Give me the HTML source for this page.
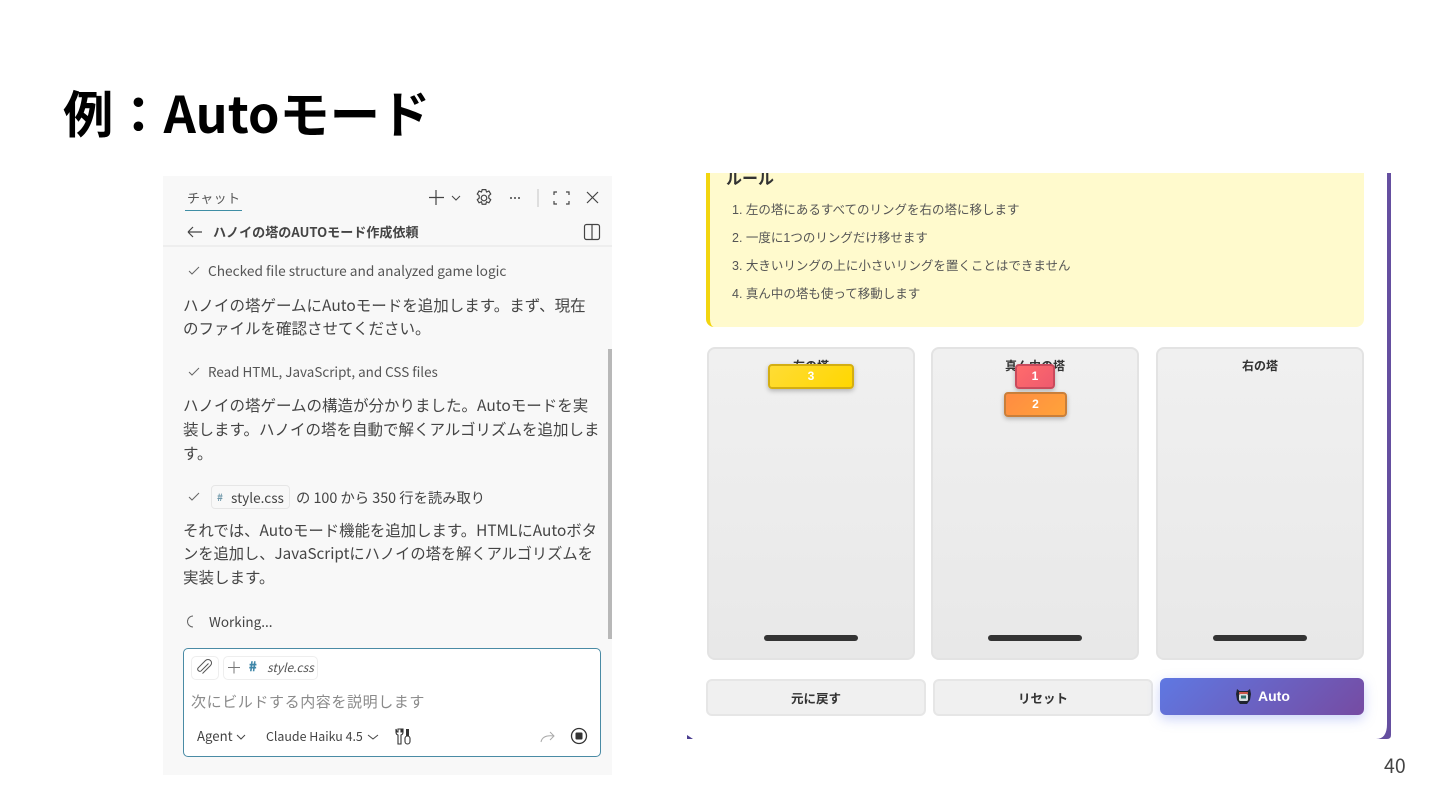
<!DOCTYPE html>
<html lang="ja"><head><meta charset="utf-8"><title>例：Autoモード</title>
<style>
*{box-sizing:border-box}
html,body{margin:0;padding:0;background:#fff}
body{width:1440px;height:810px;position:relative;overflow:hidden;font-family:"Noto Sans CJK JP","Liberation Sans",sans-serif}
.shot{position:absolute;left:0;top:0;width:1440px;height:810px;filter:blur(.3px)}
.a{position:absolute;white-space:nowrap}
.t{position:absolute;white-space:nowrap;line-height:24px;font-size:15.5px;color:#444;left:183px}
.s{position:absolute;white-space:nowrap;line-height:20px;font-size:13.7px;color:#555;left:208px}
.r{position:absolute;white-space:nowrap;line-height:20px;font-size:12.5px;color:#555;left:732px;font-family:"Liberation Sans","Noto Sans CJK JP",sans-serif}
.tower{position:absolute;top:347px;width:208px;height:313px;border:2px solid #e3e3e3;border-radius:8px;background:linear-gradient(#f0f0f0,#e8e8e8)}
.tl{position:absolute;top:357px;width:208px;text-align:center;font-size:12px;font-weight:700;line-height:18px;color:#333;font-family:"Liberation Sans","Noto Sans CJK JP",sans-serif}
.base{position:absolute;top:635px;width:94px;height:6px;border-radius:3px;background:#333}
.disk{position:absolute;height:25px;border-radius:4px;color:#fff;font:700 12px/21px "Liberation Sans",sans-serif;text-align:center;box-shadow:0 2px 5px rgba(0,0,0,.25)}
.btn{position:absolute;top:679px;height:37px;border:2px solid #e6e6e6;border-radius:6px;background:#f0f0f0;color:#333;font:700 12.5px/36px "Liberation Sans","Noto Sans CJK JP",sans-serif;text-align:center}
svg{position:absolute;overflow:visible;fill:none}
</style></head><body>

<div class="a" style="left:63px;top:76px;font-size:50.3px;font-weight:700;line-height:72px;color:#000">例：Autoモード</div>

<div class="shot">
<!-- chat panel -->
<div class="a" style="left:163px;top:176px;width:449px;height:599px;background:#f8f8f8"></div>
<div class="a" style="left:163px;top:245px;width:449px;height:2px;background:#eeeeee"></div>
<div class="a" style="left:608px;top:349px;width:4px;height:290px;background:#b8b8b8"></div>

<div class="a" style="left:187px;top:188px;font-size:13px;line-height:20px;color:#555;letter-spacing:.4px">チャット</div>
<div class="a" style="left:185px;top:210px;width:57px;height:1px;background:#3f8ea5"></div>

<svg style="left:0;top:0" width="1440" height="810" stroke="#444" stroke-width="1.2">
<path d="M436 190V205M429 197.500H444"/>
<path d="M452 196l4 4 4-4" stroke-width="1"/>
<circle cx="484" cy="198" r="2.800"/>
<g transform="translate(484 198) scale(1.2) translate(-484 -198)" stroke-width="1">
<path d="M482.500 191h3l.6 2 2-.8 1.500 2.500-1.600 1.400v2l1.600 1.400-1.500 2.500-2-.8-.6 2h-3l-.6-2-2 .8-1.500-2.500 1.600-1.400v-2l-1.600-1.400 1.500-2.500 2 .8z"/>
</g>
<path d="M538 189V207" stroke="#ccc"/>
<path d="M554 195v-3h3M566 192h3v3M569 201v3h-3M557 204h-3v-3"/>
<path d="M587 192l11 11M598 192l-11 11"/>
<path d="M188 232h14M188 232l5-5M188 232l5 5"/>
<rect x="584.500" y="224.500" width="15" height="15" rx="2"/>
<path d="M592 224.500v15"/>
<path d="M189 271l3 3 7-7M189 372l3 3 7-7M189 497l3 3 7-7" stroke="#666" stroke-width="1"/>
<path d="M193 616a5.500 5.500 0 0 0 0 11" stroke="#666" stroke-width="1"/>
</svg>
<div class="a" style="left:508px;top:197px;width:14px;text-align:center;font-size:0">
<span style="display:inline-block;width:2px;height:2px;background:#444;margin:0 1px;border-radius:50%"></span><span style="display:inline-block;width:2px;height:2px;background:#444;margin:0 1px;border-radius:50%"></span><span style="display:inline-block;width:2px;height:2px;background:#444;margin:0 1px;border-radius:50%"></span>
</div>

<div class="a" style="left:213px;top:222px;font-size:13.07px;font-weight:700;line-height:20px;color:#444">ハノイの塔のAUTOモード作成依頼</div>

<div class="s" style="top:260px">Checked file structure and analyzed game logic</div>
<div class="t" style="top:292.500px">ハノイの塔ゲームにAutoモードを追加します。まず、現在</div>
<div class="t" style="top:316px">のファイルを確認させてください。</div>
<div class="s" style="top:361px;font-size:13.45px">Read HTML, JavaScript, and CSS files</div>
<div class="t" style="top:393px">ハノイの塔ゲームの構造が分かりました。Autoモードを実</div>
<div class="t" style="top:417px">装します。ハノイの塔を自動で解くアルゴリズムを追加しま</div>
<div class="t" style="top:441px">す。</div>

<div class="a" style="left:211px;top:485px;width:79px;height:24px;border:1px solid #e6e6e6;border-radius:4px;background:#f8f8f8"></div>
<div class="a" style="left:217px;top:488px;font-size:10px;line-height:18px;font-weight:700;color:#6d96a8">#</div>
<div class="s" style="left:231px;top:487px;color:#444;font-size:13.6px">style.css</div>
<div class="s" style="left:296px;top:487.500px;color:#444;font-size:14.3px">の 100 から 350 行を読み取り</div>

<div class="t" style="top:518px;font-size:15.4px">それでは、Autoモード機能を追加します。HTMLにAutoボタ</div>
<div class="t" style="top:541px;font-size:15.25px">ンを追加し、JavaScriptにハノイの塔を解くアルゴリズムを</div>
<div class="t" style="top:565px">実装します。</div>
<div class="s" style="left:209px;top:611px;color:#444;font-size:13.5px">Working...</div>

<!-- input -->
<div class="a" style="left:183px;top:648px;width:418px;height:109px;background:#fff;border:1px solid #4a8ba5;border-radius:5px"></div>
<div class="a" style="left:191px;top:656px;width:28px;height:24px;border:1px solid #eee;border-radius:5px"></div>
<div class="a" style="left:223px;top:656px;width:95px;height:24px;border:1px solid #eee;border-radius:5px"></div>
<div class="a" style="left:249px;top:657px;font-size:13px;font-weight:700;line-height:18px;color:#3f86a8;-webkit-text-stroke:.4px #3f86a8">#</div>
<div class="a" style="left:267px;top:658px;font-size:12px;font-style:italic;line-height:20px;color:#555">style.css</div>
<div class="a" style="left:191px;top:691px;font-size:15px;line-height:22px;color:#8a8a8a;letter-spacing:.6px">次にビルドする内容を説明します</div>
<div class="a" style="left:197px;top:726px;font-size:13.2px;line-height:20px;color:#444">Agent</div>
<div class="a" style="left:266px;top:726px;font-size:12.4px;line-height:20px;color:#444">Claude Haiku 4.5</div>
<svg style="left:0;top:0" width="1440" height="810" stroke="#444" stroke-width="1">
<path d="M237 735l4 4 4-4M368 735l5 4 5-4"/>
<path d="M228 667.500h12M234 661.500v12" stroke="#777"/>
<path d="M209.500 663.500l-7.500 7.500a2.200 2.200 0 0 1-3-3l7.500-7.500a3.500 3.500 0 0 1 5 5l-8 8" stroke="#555" transform="translate(-1 0)"/>
<path d="M396 729v3a3 3 0 0 0 2 3v9h3v-9a3 3 0 0 0 2-3v-3l-1 0v3h-1v-3h-3v3h-1z" stroke="#333" stroke-width="1.100"/>
<rect x="405" y="736" width="5" height="8" rx="2.500" stroke="#333" stroke-width="1.100"/>
<path d="M407.500 736v-7" stroke="#333" stroke-width="3"/>
<path d="M541 742c1-5 5-7 13-6M550 732l4 4-4 4" stroke="#aaa"/>
<circle cx="579" cy="736" r="7.500" stroke="#333" stroke-width="1.300"/>
<rect x="575.500" y="732.500" width="7" height="7" rx="1" fill="#333" stroke="none"/>
</svg>

<!-- game -->
<div class="a" style="left:1387px;top:173px;width:4px;height:555px;background:#654fa0"></div>
<svg style="left:1376px;top:724px" width="15" height="15"><path d="M11 0H15V11Q15 15 11 15H0Q11 15 11 0Z" fill="#654fa0"/></svg>
<div class="a" style="left:687px;top:735px;width:6px;height:4px;background:#4a3d90;clip-path:polygon(0 0,100% 100%,0 100%)"></div>

<div class="a" style="left:706px;top:173px;width:658px;height:154px;background:#fffacd;border-left:4px solid #f2d50f;border-radius:0 0 8px 8px"></div>
<div class="a" style="left:726px;top:167px;width:60px;height:21px;overflow:hidden;font-size:16px;font-weight:700;line-height:20px;color:#333">ルール</div>
<div class="a" style="left:700px;top:160px;width:687px;height:13px;background:#fff"></div>
<div class="r" style="top:200px">1. 左の塔にあるすべてのリングを右の塔に移します</div>
<div class="r" style="top:228px">2. 一度に1つのリングだけ移せます</div>
<div class="r" style="top:256px">3. 大きいリングの上に小さいリングを置くことはできません</div>
<div class="r" style="top:284px">4. 真ん中の塔も使って移動します</div>

<div class="tower" style="left:707px"></div>
<div class="tower" style="left:931px"></div>
<div class="tower" style="left:1156px"></div>
<div class="tl" style="left:707px">左の塔</div>
<div class="tl" style="left:931px">真ん中の塔</div>
<div class="tl" style="left:1156px">右の塔</div>
<div class="base" style="left:764px"></div>
<div class="base" style="left:988px"></div>
<div class="base" style="left:1213px"></div>

<div class="disk" style="left:768px;top:364px;width:86px;background:linear-gradient(135deg,#ffdc35,#ffd700);border:2px solid #d4ae12">3</div>
<div class="disk" style="left:1015px;top:364px;width:40px;background:linear-gradient(135deg,#ff6b6b,#ee5a6f);border:2px solid #c94a5c">1</div>
<div class="disk" style="left:1004px;top:392px;width:63px;background:linear-gradient(135deg,#ff8c42,#ffa33a);border:2px solid #c97f3a">2</div>

<div class="btn" style="left:706px;width:220px">元に戻す</div>
<div class="btn" style="left:933px;width:220px">リセット</div>
<div class="a" style="left:1160px;top:678px;width:204px;height:37px;border-radius:6px;background:linear-gradient(135deg,#5f78e2,#764ba2);box-shadow:0 4px 12px rgba(102,126,234,.35)"></div>
<div class="a" style="left:1258px;top:687px;font:700 14px/18px 'Liberation Sans',sans-serif;color:#fff">Auto</div>
<svg style="left:0;top:0" width="1440" height="810">
<path d="M1237 689l2.500 2h8l2.500-2 1 5-1 6-3 4h-7l-3-4-1-6z" fill="#1f2430"/>
<rect x="1239" y="692" width="9" height="2" fill="#c9574a"/>
<rect x="1239" y="694" width="9" height="7" rx="1.500" fill="#d8dde0"/>
<rect x="1241" y="695.500" width="5" height="3" fill="#2f6f6a"/>
</svg>
</div>

<div class="a" style="left:1384px;top:752px;font-size:19.5px;line-height:26px;color:#444">40</div>
</body></html>
